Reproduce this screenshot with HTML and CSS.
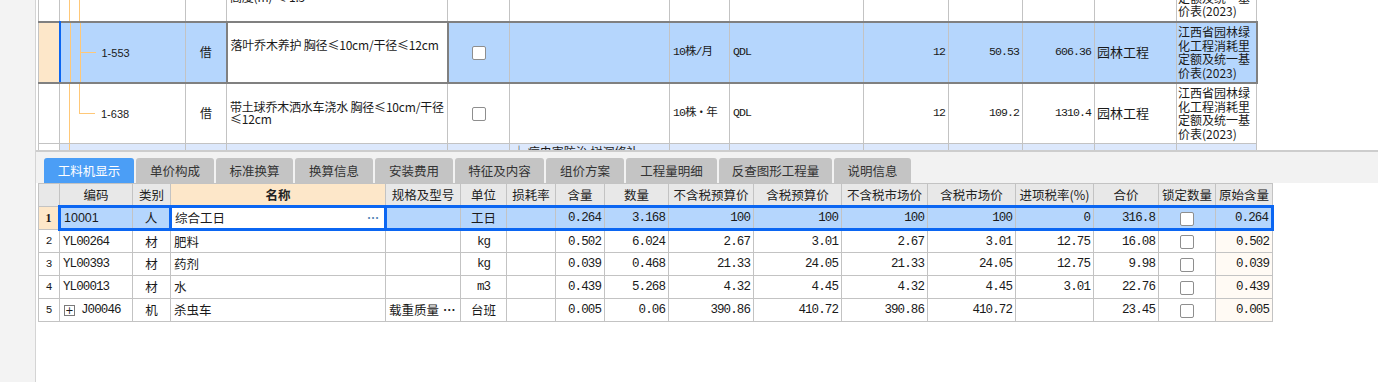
FILE: index.html
```html
<!DOCTYPE html>
<html lang="zh-CN">
<head>
    <meta charset="UTF-8">
    <title>工料机显示</title>
    <link rel="stylesheet" href="styles.css">
</head>
<body>
    <div class="page">
        <aside class="side"></aside>
        <main class="main">
            <div class="top-grid">
                <table class="grid quota">
                    <colgroup>
                        <col style="width:21px"><col style="width:126px"><col style="width:41px"><col style="width:221px">
                        <col style="width:62px"><col style="width:160px"><col style="width:60px"><col style="width:134px">
                        <col style="width:85px"><col style="width:74px"><col style="width:72px"><col style="width:82px"><col style="width:80px">
                    </colgroup>
                    <tbody>
                        <tr class="row-cut">
                            <td class="rh"></td>
                            <td class="tree tree-mid"></td>
                            <td class="ctr"></td>
                            <td class="name">乔木修剪 胸径≤10cm<br>高度(m) ≤ 1.5</td>
                            <td></td><td></td><td></td><td></td><td></td><td></td><td></td><td></td>
                            <td class="lib">江西省园林绿化工程消耗里定额及统一基价表(2023)</td>
                        </tr>
                        <tr class="row-sel">
                            <td class="rh"></td>
                            <td class="tree tree-mid"><span class="sans">1-553</span></td>
                            <td class="ctr">借</td>
                            <td class="name edit">落叶乔木养护 胸径≤10cm/干径≤12cm</td>
                            <td class="ctr"><span class="check"></span></td>
                            <td></td>
                            <td class="mono">10株/月</td>
                            <td class="mono">QDL</td>
                            <td class="n">12</td>
                            <td class="n">50.53</td>
                            <td class="n">606.36</td>
                            <td class="prof">园林工程</td>
                            <td class="lib">江西省园林绿化工程消耗里定额及统一基价表(2023)</td>
                        </tr>
                        <tr>
                            <td class="rh"></td>
                            <td class="tree tree-end"><span class="sans">1-638</span></td>
                            <td class="ctr">借</td>
                            <td class="name">带土球乔木洒水车浇水 胸径≤10cm/干径≤12cm</td>
                            <td class="ctr"><span class="check"></span></td>
                            <td></td>
                            <td class="mono">10株・年</td>
                            <td class="mono">QDL</td>
                            <td class="n">12</td>
                            <td class="n">109.2</td>
                            <td class="n">1310.4</td>
                            <td class="prof">园林工程</td>
                            <td class="lib">江西省园林绿化工程消耗里定额及统一基价表(2023)</td>
                        </tr>
                        <tr class="row-sub">
                            <td class="rh"></td>
                            <td class="tree tree-one"></td>
                            <td></td><td></td><td></td>
                            <td class="top">├ 病虫害防治 树洞修补</td>
                            <td></td><td></td><td></td><td></td><td></td><td></td><td></td>
                        </tr>
                    </tbody>
                </table>
            </div>

            <div class="tab-bar">
                <span class="tab active" style="width:90px">工料机显示</span>
                <span class="tab" style="width:78px">单价构成</span>
                <span class="tab" style="width:77px">标准换算</span>
                <span class="tab" style="width:78px">换算信息</span>
                <span class="tab" style="width:78px">安装费用</span>
                <span class="tab" style="width:89px">特征及内容</span>
                <span class="tab" style="width:78px">组价方案</span>
                <span class="tab" style="width:91px">工程量明细</span>
                <span class="tab" style="width:113px">反查图形工程量</span>
                <span class="tab" style="width:77px">说明信息</span>
            </div>

            <div class="detail">
                <table class="grid res">
                    <colgroup>
                        <col style="width:21px"><col style="width:73px"><col style="width:38px"><col style="width:215px">
                        <col style="width:75px"><col style="width:46px"><col style="width:49px"><col style="width:49px">
                        <col style="width:64px"><col style="width:85px"><col style="width:88px"><col style="width:86px">
                        <col style="width:88px"><col style="width:78px"><col style="width:65px"><col style="width:57px"><col style="width:57px">
                    </colgroup>
                    <thead>
                        <tr>
                            <th></th><th>编码</th><th>类别</th><th class="key">名称</th><th>规格及型号</th><th>单位</th>
                            <th>损耗率</th><th>含量</th><th>数量</th><th>不含税预算价</th><th>含税预算价</th>
                            <th>不含税市场价</th><th>含税市场价</th><th>进项税率(%)</th><th>合价</th><th>锁定数量</th><th>原始含量</th>
                        </tr>
                    </thead>
                    <tbody>
                        <tr class="row-sel">
                            <td class="rn first">1</td>
                            <td class="sans">10001</td>
                            <td class="ctr">人</td>
                            <td class="name edit"><span class="cell-text">综合工日</span><span class="more">⋯</span></td>
                            <td></td>
                            <td class="ctr">工日</td>
                            <td></td>
                            <td class="n">0.264</td>
                            <td class="n">3.168</td>
                            <td class="n">100</td>
                            <td class="n">100</td>
                            <td class="n">100</td>
                            <td class="n">100</td>
                            <td class="n">0</td>
                            <td class="n">316.8</td>
                            <td class="ctr"><span class="check"></span></td>
                            <td class="n last">0.264</td>
                        </tr>
                        <tr>
                            <td class="rn">2</td>
                            <td class="mono">YL00264</td>
                            <td class="ctr">材</td>
                            <td>肥料</td>
                            <td></td>
                            <td class="mono ctr">kg</td>
                            <td></td>
                            <td class="n">0.502</td>
                            <td class="n">6.024</td>
                            <td class="n">2.67</td>
                            <td class="n">3.01</td>
                            <td class="n">2.67</td>
                            <td class="n">3.01</td>
                            <td class="n">12.75</td>
                            <td class="n">16.08</td>
                            <td class="ctr"><span class="check"></span></td>
                            <td class="n orig">0.502</td>
                        </tr>
                        <tr>
                            <td class="rn">3</td>
                            <td class="mono">YL00393</td>
                            <td class="ctr">材</td>
                            <td>药剂</td>
                            <td></td>
                            <td class="mono ctr">kg</td>
                            <td></td>
                            <td class="n">0.039</td>
                            <td class="n">0.468</td>
                            <td class="n">21.33</td>
                            <td class="n">24.05</td>
                            <td class="n">21.33</td>
                            <td class="n">24.05</td>
                            <td class="n">12.75</td>
                            <td class="n">9.98</td>
                            <td class="ctr"><span class="check"></span></td>
                            <td class="n orig">0.039</td>
                        </tr>
                        <tr>
                            <td class="rn">4</td>
                            <td class="mono">YL00013</td>
                            <td class="ctr">材</td>
                            <td>水</td>
                            <td></td>
                            <td class="mono ctr">m3</td>
                            <td></td>
                            <td class="n">0.439</td>
                            <td class="n">5.268</td>
                            <td class="n">4.32</td>
                            <td class="n">4.45</td>
                            <td class="n">4.32</td>
                            <td class="n">4.45</td>
                            <td class="n">3.01</td>
                            <td class="n">22.76</td>
                            <td class="ctr"><span class="check"></span></td>
                            <td class="n orig">0.439</td>
                        </tr>
                        <tr>
                            <td class="rn">5</td>
                            <td class="mono"><span class="expand">+</span>J00046</td>
                            <td class="ctr">机</td>
                            <td>杀虫车</td>
                            <td class="spec">载重质量<span class="dots">⋯</span></td>
                            <td class="ctr">台班</td>
                            <td></td>
                            <td class="n">0.005</td>
                            <td class="n">0.06</td>
                            <td class="n">390.86</td>
                            <td class="n">410.72</td>
                            <td class="n">390.86</td>
                            <td class="n">410.72</td>
                            <td class="n"></td>
                            <td class="n">23.45</td>
                            <td class="ctr"><span class="check"></span></td>
                            <td class="n orig">0.005</td>
                        </tr>
                    </tbody>
                </table>
            </div>
        </main>
    </div>
</body>
</html>
```

FILE: styles.css
```css
:root {
    --grid-line: #c3c3c3;
    --sel-bg: #b5d6fd;
    --sel-blue: #0b66f2;
    --peach: #fde7c9;
    --tree: #ffc878;
    --side-bg: #f3f3f3;
    --text: #1a1a1a;
}

html, body {
    margin: 0;
    padding: 0;
    height: 100%;
    background: #fff;
    color: var(--text);
    font-family: "Noto Sans CJK SC", "Liberation Sans", sans-serif;
    font-size: 12px;
}

.page {
    display: flex;
    height: 382px;
    overflow: hidden;
}

.side {
    width: 35px;
    flex-shrink: 0;
    background: var(--side-bg);
    border-right: 1px solid #d4d4d4;
}

.main {
    flex: 1;
    display: flex;
    flex-direction: column;
    min-width: 0;
}

/* grids */
.grid {
    border-collapse: collapse;
    table-layout: fixed;
}

.grid td, .grid th {
    border: 1px solid var(--grid-line);
    padding: 0 3px;
    overflow: hidden;
    white-space: nowrap;
    line-height: 14px;
}

.mono, .n {
    font-family: "Liberation Mono", "Noto Sans CJK SC", monospace;
    font-size: 11.5px;
    letter-spacing: -0.9px;
}

.n {
    text-align: right;
}

.ctr {
    text-align: center;
}

.sans {
    font-family: "Liberation Sans", sans-serif;
    font-size: 11px;
}

.check {
    display: inline-block;
    width: 12px;
    height: 12px;
    border: 1px solid #8e8e8e;
    border-radius: 2px;
    background: #fff;
    vertical-align: middle;
}

/* top quota grid */
.top-grid {
    height: 150px;
    overflow: hidden;
    padding-left: 2px;
}

.quota {
    width: 1218px;
    margin-top: -40px;
}

.quota tr {
    height: 61px;
}

.quota tr.row-sub {
    height: 30px;
    background: #dce8fc;
}

.quota .rh {
    padding: 0;
}

.quota .row-sub .rh {
    background: #fff;
}

.quota .name {
    white-space: normal;
    line-height: 12px;
    font-size: 12px;
    letter-spacing: -0.2px;
}

.quota .lib {
    white-space: normal;
    padding: 0 1px;
    line-height: 13.5px;
    font-size: 12px;
    letter-spacing: 0;
    word-break: break-all;
}

.quota .prof {
    font-size: 13px;
    padding-left: 2px;
}

.quota .top {
    vertical-align: top;
    padding-top: 1px;
}

.tree {
    padding-left: 41px !important;
    background-repeat: no-repeat;
}

.tree-mid {
    background-image:
        linear-gradient(var(--tree), var(--tree)),
        linear-gradient(var(--tree), var(--tree)),
        linear-gradient(var(--tree), var(--tree));
    background-size: 1px 100%, 1px 100%, 16px 1px;
    background-position: 9px 0, 19px 0, 19px 50%;
}

.tree-end {
    background-image:
        linear-gradient(var(--tree), var(--tree)),
        linear-gradient(var(--tree), var(--tree)),
        linear-gradient(var(--tree), var(--tree));
    background-size: 1px 100%, 1px 50%, 16px 1px;
    background-position: 9px 0, 19px 0, 19px 50%;
}

.tree-one {
    background-image: linear-gradient(var(--tree), var(--tree));
    background-size: 1px 100%;
    background-position: 9px 0;
}

.quota .row-sel td {
    background-color: var(--sel-bg);
    border-top: 2px solid #808080;
    border-bottom: 2px solid #808080;
}

.quota .row-sel td:last-child {
    border-right: 2px solid #808080;
}

.quota .row-sel .rh {
    background: var(--peach);
    border-right: 2px solid var(--sel-blue);
}

.quota .row-sel .edit {
    background: #fff;
    border: 2px solid #808080;
    vertical-align: top;
    padding-top: 16px;
}

/* tabs */
.tab-bar {
    display: flex;
    gap: 2px;
    padding: 6px 0 0 8px;
    background: #f2f2f2;
    border-top: 2px solid #cdcdcd;
}

.tab {
    height: 25px;
    line-height: 25px;
    text-align: center;
    background: #c4c4c4;
    color: #333;
    font-size: 12.5px;
    border-radius: 3px 3px 0 0;
}

.tab.active {
    background: #4b9ef6;
    color: #fff;
}

/* resource grid */
.detail {
    flex: 1;
    padding-left: 2px;
    background: #fff;
}

.res {
    width: 1234px;
}

.res tr {
    height: 23px;
}

.res th {
    background: #e8e8e8;
    font-weight: normal;
    font-size: 12.5px;
    color: #222;
}

.res th.key {
    background: var(--peach);
    font-weight: bold;
}

.res td {
    font-size: 12.5px;
}

.res .rn {
    text-align: center;
    font-family: "Liberation Mono", monospace;
    font-size: 11px;
    padding: 0;
}

.res .rn.first {
    background: var(--peach);
    font-family: "Liberation Serif", serif;
    font-weight: bold;
    font-size: 12px;
}

.res .row-sel td {
    background: var(--sel-bg);
    border-top: 3px solid var(--sel-blue);
    border-bottom: 3px solid var(--sel-blue);
}

.res .row-sel td.rn {
    background: var(--peach);
    border-top-width: 1px;
    border-bottom-width: 1px;
    border-top-color: var(--grid-line);
    border-bottom-color: var(--grid-line);
    border-right: 3px solid var(--sel-blue);
}

.res .row-sel td.last {
    border-right: 3px solid var(--sel-blue);
}

.res .row-sel .edit {
    background: #fff;
    border: 3px solid var(--sel-blue);
}

.cell-text {
    display: inline-block;
    width: 192px;
}

.more {
    color: #4f7fb3;
    font-weight: bold;
    font-size: 12px;
}

.orig {
    background: #fffaf4;
}

.spec {
    font-size: 12px;
}

.spec .dots {
    font-weight: bold;
    margin-left: 4px;
}

.expand {
    display: inline-block;
    width: 9px;
    height: 9px;
    line-height: 9px;
    border: 1px solid #7a7a7a;
    text-align: center;
    font-family: "DejaVu Sans", sans-serif;
    font-size: 10px;
    letter-spacing: 0;
    margin: 0 6px 0 1px;
    vertical-align: -1px;
}
```
